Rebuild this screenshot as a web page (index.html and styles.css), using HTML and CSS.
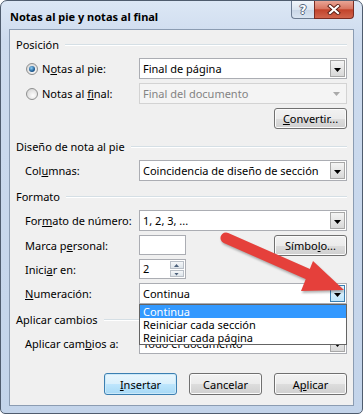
FILE: index.html
```html
<!DOCTYPE html>
<html lang="es">
<head>
    <meta charset="UTF-8">
    <meta name="viewport" content="width=device-width, initial-scale=1.0">
    <title>Notas al pie y notas al final</title>
    <link rel="stylesheet" href="styles.css">
</head>
<body>
    <div class="window">
        <div class="titlebar">
            <div class="title">Notas al pie y notas al final</div>
            <div class="caption-buttons">
                <div class="cap-btn help">?</div>
                <div class="cap-btn close">
                    <svg width="14" height="11" viewBox="0 0 14 11">
                        <path d="M3 2 L11 9 M11 2 L3 9" stroke="#5a1d14" stroke-width="4" stroke-linecap="square" fill="none"/>
                        <path d="M3 2 L11 9 M11 2 L3 9" stroke="#fff" stroke-width="2.2" stroke-linecap="square" fill="none"/>
                    </svg>
                </div>
            </div>
        </div>

        <div class="client">
            <div class="section">
                <div class="group-title">Posición</div>
                <div class="row">
                    <label class="radio-label"><span class="radio checked"></span><span>N<u>o</u>tas al pie:</span></label>
                    <div class="select"><span>Final de página</span><span class="drop"></span></div>
                </div>
                <div class="row">
                    <label class="radio-label"><span class="radio"></span><span>Notas al <u>f</u>inal:</span></label>
                    <div class="select disabled"><span>Final del documento</span><span class="drop"></span></div>
                </div>
                <div class="row row-end convert-row">
                    <button class="btn"><u>C</u>onvertir...</button>
                </div>
            </div>

            <div class="section">
                <div class="group-title">Diseño de nota al pie</div>
                <div class="row">
                    <label>Col<u>u</u>mnas:</label>
                    <div class="select"><span>Coincidencia de diseño de sección</span><span class="drop"></span></div>
                </div>
            </div>

            <div class="section">
                <div class="group-title">Formato</div>
                <div class="row">
                    <label>For<u>m</u>ato de número:</label>
                    <div class="select"><span>1, 2, 3, ...</span><span class="drop"></span></div>
                </div>
                <div class="row short">
                    <label>Marca p<u>e</u>rsonal:</label>
                    <div class="textbox"></div>
                    <button class="btn push-right">Símbo<u>l</u>o...</button>
                </div>
                <div class="row short">
                    <label>Inici<u>a</u>r en:</label>
                    <div class="spin">
                        <span class="spin-value">2</span>
                        <span class="spin-buttons">
                            <span class="spin-up"></span>
                            <span class="spin-down"></span>
                        </span>
                    </div>
                </div>
                <div class="row">
                    <label><u>N</u>umeración:</label>
                    <div class="select open">
                        <span>Continua</span><span class="drop hot"></span>
                        <div class="listbox">
                            <div class="selected">Continua</div>
                            <div>Reiniciar cada sección</div>
                            <div>Reiniciar cada página</div>
                        </div>
                    </div>
                </div>
            </div>

            <div class="section">
                <div class="group-title">Aplicar cambios</div>
                <div class="row">
                    <label>Aplicar cam<u>b</u>ios a:</label>
                    <div class="select"><span>Todo el documento</span><span class="drop"></span></div>
                </div>
            </div>

            <div class="footer">
                <button class="btn default"><u>I</u>nsertar</button>
                <button class="btn">Cancelar</button>
                <button class="btn">A<u>p</u>licar</button>
            </div>
        </div>
    </div>

    <!-- red pointer drawn over the dialog -->
    <svg class="pointer" width="363" height="414" viewBox="0 0 363 414">
        <line x1="226" y1="238" x2="310" y2="275" stroke="#e5403b" stroke-width="11" stroke-linecap="round"/>
        <polygon points="313,261 301,291 344,290" fill="#e5403b"/>
    </svg>
</body>
</html>
```

FILE: styles.css
```css
body {
    margin: 0;
    font-family: "Noto Sans", "Segoe UI", sans-serif;
    font-size: 11px;
    color: #000;
    background: #fff;
}
.window {
    width: 363px;
    height: 414px;
    box-sizing: border-box;
    border: 1px solid #4f5c6e;
    border-radius: 7px 7px 5px 5px;
    background: linear-gradient(#dce7f5, #cddbee 40px, #c3d4ea);
    padding: 0 8px 7px;
    display: flex;
    flex-direction: column;
    overflow: hidden;
}
.titlebar {
    height: 28px;
    flex-shrink: 0;
    display: flex;
    justify-content: space-between;
}
.title {
    font-weight: bold;
    line-height: 15px;
    margin: 8px 0 0 1px;
}
.caption-buttons {
    display: flex;
    align-self: flex-start;
}
.cap-btn {
    height: 18px;
    box-sizing: border-box;
    border: 1px solid #6b7b91;
    border-top: none;
    display: flex;
    align-items: center;
    justify-content: center;
}
.help {
    width: 23px;
    border-right: none;
    border-radius: 0 0 0 4px;
    background: linear-gradient(#f2f6fb, #dbe4ef 50%, #c8d5e6 51%, #d9e4f1);
    color: #fff;
    font: bold 12px "DejaVu Sans", sans-serif;
    text-shadow: 1px 0 0 #56677e, -1px 0 0 #56677e, 0 1px 0 #56677e, 0 -1px 0 #56677e;
}
.close {
    width: 40px;
    border-color: #7a2c22;
    border-radius: 0 0 4px 0;
    background: linear-gradient(#e9a596, #d87662 45%, #c2432b 52%, #d0654d);
}
.client {
    flex: 1;
    border: 1px solid #8b9cb2;
    background: #f0f0f0;
    padding: 8px 6px 0;
}
.section {
    display: flex;
    flex-direction: column;
    gap: 4px;
}
.section + .section {
    margin-top: 9px;
}
.group-title {
    display: flex;
    align-items: center;
    height: 14px;
    line-height: 14px;
    margin-bottom: 2px;
}
.group-title::after {
    content: "";
    flex: 1;
    margin-left: 6px;
    border-top: 1px solid #d5dfe5;
    border-bottom: 1px solid #fff;
}
.row {
    display: flex;
    align-items: center;
    height: 21px;
    padding-left: 9px;
}
.row.short {
    height: 20px;
}
.row > label {
    width: 114px;
    flex-shrink: 0;
}
.row-end {
    justify-content: flex-end;
}
.convert-row {
    margin-bottom: 2px;
}
.radio-label {
    display: flex;
    align-items: center;
}
.radio {
    width: 12px;
    height: 12px;
    box-sizing: border-box;
    margin: 0 4px 0 1px;
    border: 1px solid #8e8f8f;
    border-radius: 50%;
    background: radial-gradient(circle at 60% 65%, #fefefe, #dcdcdc 70%);
    position: relative;
}
.radio.checked::after {
    content: "";
    position: absolute;
    left: 2px;
    top: 2px;
    width: 6px;
    height: 6px;
    border-radius: 50%;
    background: radial-gradient(circle at 40% 35%, #8ed0f7, #1d5c94 60%, #0d2d56);
}
.select {
    flex: 1;
    position: relative;
    height: 21px;
    box-sizing: border-box;
    border: 1px solid #abadb3;
    background: #fff;
    padding-left: 3px;
    line-height: 19px;
}
.drop {
    position: absolute;
    top: 1px;
    right: 1px;
    bottom: 1px;
    width: 15px;
    box-sizing: border-box;
    border: 1px solid #a7a7a7;
    background: linear-gradient(#f4f4f4, #e6e6e6 50%, #d8d8d8);
}
.drop::after {
    content: "";
    position: absolute;
    left: 3px;
    top: 7px;
    width: 7px;
    height: 4px;
    background: #000;
    clip-path: polygon(0 0, 100% 0, 50% 100%);
}
.select.disabled {
    background: #f4f4f4;
    border-color: #d3d3d3;
    color: #838383;
}
.select.disabled .drop {
    border: none;
    background: none;
}
.select.disabled .drop::after {
    background: #a9a9a9;
}
.drop.hot {
    border-color: #3c7fb1;
    background: linear-gradient(#e8f5fc, #d7eefb 50%, #bee6fd);
}
.listbox {
    position: absolute;
    top: calc(100% + 1px);
    left: -1px;
    right: -1px;
    border: 1px solid #646464;
    background: #fff;
    z-index: 2;
}
.listbox div {
    height: 13px;
    line-height: 13px;
    padding-left: 3px;
}
.listbox .selected {
    background: #3399ff;
    color: #fff;
}
.textbox {
    width: 47px;
    height: 20px;
    box-sizing: border-box;
    border: 1px solid #abadb3;
    background: #fff;
}
.spin {
    width: 47px;
    height: 20px;
    box-sizing: border-box;
    border: 1px solid #abadb3;
    background: #fff;
    display: flex;
}
.spin-value {
    flex: 1;
    padding-left: 3px;
    line-height: 18px;
}
.spin-buttons {
    width: 16px;
    display: flex;
    flex-direction: column;
    padding: 1px;
    gap: 1px;
    box-sizing: border-box;
}
.spin-up, .spin-down {
    flex: 1;
    position: relative;
    border: 1px solid #b9bfc7;
    background: linear-gradient(#f5f7f9, #dde4ea);
}
.spin-up::after, .spin-down::after {
    content: "";
    position: absolute;
    left: 3px;
    top: 2px;
    width: 5px;
    height: 3px;
    background: #4c607a;
}
.spin-up::after {
    clip-path: polygon(50% 0, 100% 100%, 0 100%);
}
.spin-down::after {
    clip-path: polygon(0 0, 100% 0, 50% 100%);
}
.btn {
    width: 73px;
    height: 21px;
    box-sizing: border-box;
    border: 1px solid #707070;
    border-radius: 3px;
    background: linear-gradient(#f2f2f2, #ebebeb 50%, #dddddd 51%, #cfcfcf);
    box-shadow: inset 0 0 0 1px #fbfbfb;
    font-family: inherit;
    font-size: 11px;
    color: #000;
    padding: 0;
}
.push-right {
    margin-left: auto;
}
.footer {
    display: flex;
    justify-content: flex-end;
    gap: 12px;
    margin-top: 19px;
}
.footer .btn {
    height: 22px;
}
.btn.default {
    border-color: #3c7fb1;
    background: linear-gradient(#eaf6fd, #d9f0fc 50%, #bee6fd 51%, #a7d9f5);
    box-shadow: inset 0 0 0 1px #cbe9f9;
}
.pointer {
    position: absolute;
    top: 0;
    left: 0;
    pointer-events: none;
    filter: drop-shadow(1px 2px 1px rgba(0, 0, 0, 0.3));
}
```
